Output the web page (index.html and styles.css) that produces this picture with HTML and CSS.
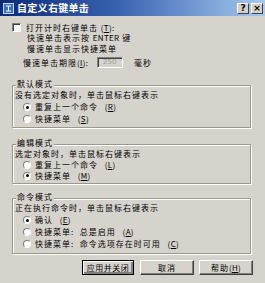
FILE: index.html
```html
<!DOCTYPE html>
<html>
<head>
<meta charset="utf-8">
<link rel="stylesheet" href="styles.css">
</head>
<body>
<div class="dialog">
  <div class="titlebar">
    <span class="ticon"><svg width="11" height="11" viewBox="0 0 11 11"><rect x="0.5" y="0.5" width="10" height="10" fill="#3a6ec8" stroke="#c8dcf8"/><path d="M3 3h5M5.5 3v5M3 8h5" stroke="#fff" stroke-width="1"/></svg></span>
    <span class="ttext">自定义右键单击</span>
    <span class="tbtns">
      <span class="tbtn">?</span>
      <span class="tbtn">×</span>
    </span>
  </div>
  <div class="content">
    <div class="row r1"><span class="check"></span><span>打开计时右键单击 <span class="mn">(<u>T</u>):</span></span></div>
    <div class="lines indent">快速单击表示按 <span class="mn">ENTER</span> 键<br>慢速单击显示快捷菜单</div>
    <div class="row r4"><span class="lbl">慢速单击期限<span class="mn">(<u>I</u>):</span></span><span class="input">250</span><span class="unit">毫秒</span></div>

    <div class="group g1">
      <span class="legend">默认模式</span>
      <div class="desc">没有选定对象时，单击鼠标右键表示</div>
      <div class="opt"><span class="radio on"></span>重复上一个命令 <span class="mn">(<u>R</u>)</span></div>
      <div class="opt"><span class="radio"></span>快捷菜单 <span class="mn">(<u>S</u>)</span></div>
    </div>

    <div class="group g2">
      <span class="legend">编辑模式</span>
      <div class="desc">选定对象时，单击鼠标右键表示</div>
      <div class="opt"><span class="radio"></span>重复上一个命令 <span class="mn">(<u>L</u>)</span></div>
      <div class="opt"><span class="radio on"></span>快捷菜单 <span class="mn">(<u>M</u>)</span></div>
    </div>

    <div class="group g3">
      <span class="legend">命令模式</span>
      <div class="desc">正在执行命令时，单击鼠标右键表示</div>
      <div class="opt"><span class="radio on"></span>确认 <span class="mn">(<u>E</u>)</span></div>
      <div class="opt"><span class="radio"></span>快捷菜单:  总是启用 <span class="mn">(<u>A</u>)</span></div>
      <div class="opt last"><span class="radio"></span>快捷菜单:  命令选项存在时可用 <span class="mn">(<u>C</u>)</span></div>
    </div>

    <div class="buttons">
      <span class="btn def">应用并关闭</span>
      <span class="btn b2">取消</span>
      <span class="btn b3">帮助 <span class="mn">(<u>H</u>)</span></span>
    </div>
  </div>
</div>
</body>
</html>
```

FILE: styles.css
```css
* { box-sizing: border-box; }
html, body { margin: 0; padding: 0; }
body { width: 265px; height: 283px; overflow: hidden; background: #d6d2cc; }
.dialog {
  width: 265px; height: 283px;
  background: #d6d2cc;
  font-family: "Noto Sans CJK SC", "Noto Sans", sans-serif;
  font-size: 8px;
  letter-spacing: 1px;
  color: #000;
}
u { text-decoration: underline; }
.mn { letter-spacing: 0.3px; }
.titlebar {
  height: 16px;
  display: flex; align-items: center;
  padding: 0 2px 0 3px;
  background: linear-gradient(to right, #0c2a78 0%, #3a64b0 45%, #a6caf0 100%);
  color: #fff;
  letter-spacing: 0;
}
.ticon { width: 11px; height: 11px; display: flex; margin-right: 3px; }
.ttext { font-weight: bold; font-size: 10px; line-height: 12px; letter-spacing: 0.3px; }
.tbtns { margin-left: auto; display: flex; gap: 2px; }
.tbtn {
  width: 12px; height: 11px;
  background: #d4d0c8;
  color: #000; font-family: "DejaVu Sans", sans-serif; font-weight: bold;
  font-size: 9px; line-height: 9px; text-align: center;
  border: 1px solid; border-color: #fff #404040 #404040 #fff;
}
.content { padding: 5px 14px 0 12px; }
.row { display: flex; align-items: center; }
.r1 { height: 12px; gap: 5px; }
.check {
  width: 9px; height: 9px; background: #fff;
  border: 1px solid; border-color: #808080 #fff #fff #808080;
  box-shadow: inset 1px 1px 0 #404040;
}
.lines { line-height: 11px; height: 21px; margin-top: -1px; }
.indent { padding-left: 15px; }
.r4 { height: 11px; margin-top: 4px; padding-left: 11px; }
.lbl { width: 74px; }
.input {
  width: 26px; height: 11px;
  border: 1px solid; border-color: #808080 #fff #fff #808080;
  box-shadow: inset 1px 1px 0 #404040;
  color: #a09c96; font-size: 7px; line-height: 9px; padding-left: 5px;
  font-family: "DejaVu Sans", sans-serif; letter-spacing: 0;
}
.unit { margin-left: 11px; }
.group {
  position: relative;
  width: 239px;
  border: 1px solid #9c9890;
  box-shadow: inset 1px 1px 0 #fff, 1px 1px 0 #fff;
  padding: 3px 0 2px 2px;
}
.legend {
  position: absolute; left: 3px; top: -8px;
  padding: 0 1px; background: #d6d2cc;
  line-height: 11px; height: 11px;
}
.g1 { margin-top: 17px; }
.g2 { margin-top: 16px; padding-bottom: 2px; }
.g3 { margin-top: 14px; padding-top: 3px; padding-bottom: 4px; }
.desc { line-height: 12px; height: 12px; }
.opt { display: flex; align-items: center; padding-left: 8px; gap: 4px; line-height: 12px; height: 12px; white-space: pre; }
.g2 .desc { height: 11px; line-height: 11px; }
.g2 .opt { height: 11px; line-height: 11px; }
.g3 .opt.last { height: 11px; }
.radio {
  width: 8px; height: 8px; border-radius: 50%;
  background: #fff;
  border: 1px solid; border-color: #808080 #fff #fff #808080;
  position: relative;
  flex: none;
}
.radio.on::after {
  content: ""; position: absolute; left: 1.5px; top: 1.5px;
  width: 3px; height: 3px; border-radius: 50%; background: #000;
}
.buttons { display: flex; justify-content: flex-end; margin-top: 6px; margin-right: -2px; }
.btn {
  height: 15px; width: 54px;
  display: flex; align-items: center; justify-content: center;
  border: 1px solid; border-color: #fff #404040 #404040 #fff;
  box-shadow: inset -1px -1px 0 #808080;
  line-height: 12px;
}
.btn.def { width: 52px; border: 1px solid #000; box-shadow: inset 1px 1px 0 #fff, inset -2px -2px 0 #808080; letter-spacing: 0.5px; }
.b2 { margin-left: 6px; }
.b3 { margin-left: 5px; }
```
